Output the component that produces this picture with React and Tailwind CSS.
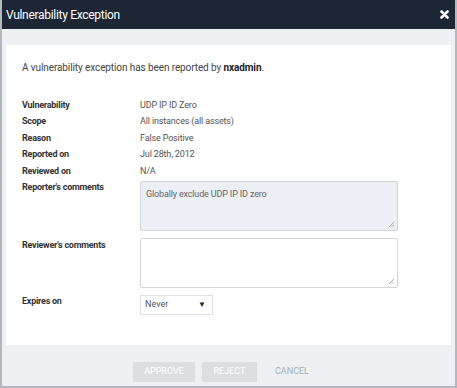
import React from 'react';

const details = [
  { label: 'Vulnerability', value: 'UDP IP ID Zero' },
  { label: 'Scope', value: 'All instances (all assets)' },
  { label: 'Reason', value: 'False Positive' },
  { label: 'Reported on', value: 'Jul 28th, 2012' },
  { label: 'Reviewed on', value: 'N/A' },
];

const Grip = () => (
  <svg className="absolute bottom-[3px] right-[3px]" width="6" height="6" viewBox="0 0 6 6">
    <path d="M1 6 L6 1 M3.5 6 L6 3.5" stroke="#999" strokeWidth="0.8" />
  </svg>
);

const labelCls = 'w-[118px] shrink-0 font-bold text-[9px] tracking-[-0.25px] text-[#333]';

export default function App() {
  return (
    <div
      className="w-[457px] h-[388px] flex flex-col border-x-2 border-b-2 border-[#b4b8bc] bg-[#eef1f4] text-[#444]"
      style={{ fontFamily: 'Roboto, "Noto Sans", sans-serif' }}
    >
      {/* Title bar */}
      <div className="h-[29px] shrink-0 bg-[#1d2635] flex items-center justify-between pl-[4px] pr-[6px]">
        <span className="text-[12px] tracking-[-0.3px] text-white">Vulnerability Exception</span>
        <svg width="9" height="9" viewBox="0 0 9 9">
          <path d="M1.5 1.5 L7.5 7.5 M7.5 1.5 L1.5 7.5" stroke="#fff" strokeWidth="2.6" strokeLinecap="round" />
        </svg>
      </div>

      <div className="flex-1 flex flex-col px-[4px] pt-[16px]">
        {/* Card */}
        <div className="bg-white h-[300px] px-[16px] pt-[16px]">
          <p className="leading-[14px] text-[10px] tracking-[-0.1px] text-[#444]">
            A vulnerability exception has been reported by <span className="font-bold text-[#222]">nxadmin</span>.
          </p>

          <div className="mt-[22px]">
            {details.map((d) => (
              <div key={d.label} className="flex h-[16.6px] items-center">
                <span className={labelCls}>{d.label}</span>
                <span className="text-[9px] tracking-[-0.15px] text-[#555]">{d.value}</span>
              </div>
            ))}

            <div className="flex mt-[1px]">
              <span className={labelCls}>Reporter's comments</span>
              <div className="relative w-[258px] h-[50px] border border-[#d3d7dc] rounded-[2px] bg-[#eceff3] px-[5px] py-[6px] text-[9px] tracking-[-0.15px] text-[#666]">
                Globally exclude UDP IP ID zero
                <Grip />
              </div>
            </div>

            <div className="flex mt-[7px]">
              <span className={`${labelCls} pt-[1px]`}>Reviewer's comments</span>
              <div className="relative w-[258px] h-[50px] border border-[#d3d7dc] rounded-[2px] bg-white">
                <Grip />
              </div>
            </div>

            <div className="flex mt-[7px]">
              <span className={labelCls}>Expires on</span>
              <div className="w-[73px] h-[20px] border border-[#dde0e4] bg-white flex items-center justify-between pl-[4px] pr-[6px] text-[9px] text-[#555]">
                <span>Never</span>
                <span className="text-[8px] text-[#222]">▼</span>
              </div>
            </div>
          </div>
        </div>

        {/* Footer buttons */}
        <div className="flex-1 flex items-start pl-[127px] pt-[17px] gap-[7px] text-[9px]">
          <div className="w-[62px] h-[20px] bg-[#dcdfe2] text-white flex items-center justify-center">APPROVE</div>
          <div className="w-[55px] h-[20px] bg-[#dcdfe2] text-white flex items-center justify-center">REJECT</div>
          <div className="w-[56px] h-[20px] text-[#a8adb2] flex items-center justify-center">CANCEL</div>
        </div>
      </div>
    </div>
  );
}
